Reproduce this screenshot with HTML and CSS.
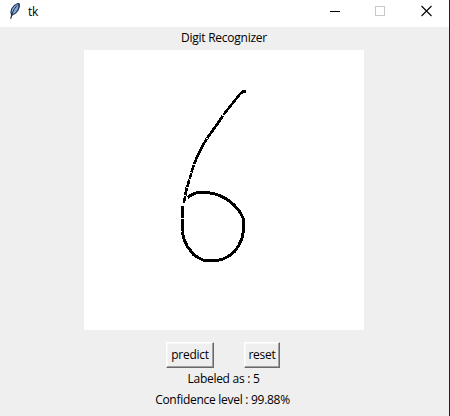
FILE: index.html
```html
<!DOCTYPE html>
<html lang="en">
<head>
<meta charset="utf-8">
<title>tk</title>
<link rel="stylesheet" href="styles.css">
</head>
<body>
<div class="window">
  <header class="titlebar">
    <svg class="feather" width="14" height="18" viewBox="0 0 14 18">
      <path d="M2.700 16.500 3 12.500 2.300 10.500 3.200 6.500 6 3 9.500 1 11.800 1.200 12 4.500 10.500 8.500 8 11.500 4.500 13.500Z" fill="#203a60"/>
      <path d="M3.500 10.500 4.200 7 6.500 4 9.500 2 10.500 4 9.500 7.500 7.500 10.500 5 12Z" fill="#86a8da"/>
      <path d="M2.800 17C3.500 12 5.500 7.500 9 3.500" fill="none" stroke="#1a2638" stroke-width=".9"/>
    </svg>
    <span class="title">tk</span>
    <div class="controls">
      <svg width="46" height="27" viewBox="0 0 46 27" shape-rendering="crispEdges"><path d="M16 11.500h10" stroke="#000"/></svg>
      <svg width="46" height="27" viewBox="0 0 46 27" shape-rendering="crispEdges"><path d="M16.500 6.500h9v9h-9z" fill="none" stroke="#c8c8c8"/></svg>
      <svg width="46" height="27" viewBox="0 0 46 27"><path d="m16.500 6 10 10m0-10-10 10" stroke="#000" stroke-width="1.100"/></svg>
    </div>
  </header>
  <main class="content">
    <h1 class="label heading">Digit Recognizer</h1>
    <svg class="canvas" width="280" height="280" viewBox="84 50 280 280">
      <g fill="none" stroke="#000" stroke-width="3" stroke-linecap="square" stroke-linejoin="round" shape-rendering="crispEdges">
        <path stroke-width="2.600" d="M245 91.500H243L240 94 236 99 232 104 228 109 224 114"/>
        <path stroke-width="2.600" d="M222 117 218 123 213 130 208 137"/>
        <path stroke-width="2.600" d="M206 140 202 147 198 155 194.500 163"/>
        <path stroke-width="2.600" d="M193.500 166 192 171M191 174 190 178M189 181 187.500 186M186.500 189 185.500 194M185 197 184 202"/>
        <path d="M182.500 207V216M182.500 220V229"/>
        <path d="M182.500 233 184 239 187 246 190 250 194 255 199 258 204 260.500H217L223 259 229 256 235 251 239 245 242 238 243.500 231V219L240 212 234 205 228 200 222 196.500 215 194 208 192.500H198L194 193.500 189 196.500"/>
      </g>
    </svg>
    <div class="actions">
      <button class="button predict" type="button">predict</button>
      <button class="button reset" type="button">reset</button>
    </div>
    <p class="label result">Labeled as : 5</p>
    <p class="label confidence">Confidence level : 99.88%</p>
  </main>
</div>
</body>
</html>
```
FILE: styles.css
```css
* { box-sizing: border-box; }
body {
  margin: 0;
  overflow: hidden;
  background: #efefef;
  color: #000;
  font: 12px/16px "Open Sans", "Noto Sans", sans-serif;
}
.window {
  width: 450px;
  height: 416px;
  border-right: 1px solid #202326;
}
.titlebar {
  display: flex;
  height: 27px;
  padding-left: 8px;
  background: #fff;
}
.feather { margin-top: 2px; }
.title { margin: 4px 0 0 6px; letter-spacing: -.3px; }
.controls { display: flex; margin-left: auto; margin-right: -1px; }
.controls svg { display: block; margin-right: -.5px; }
.content {
  display: flex;
  flex-direction: column;
  align-items: center;
  padding-right: 1px;
}
.label { margin: 0; font-size: 12px; font-weight: 400; white-space: nowrap; }
.heading { height: 23px; padding-top: 3px; letter-spacing: -.25px; }
.canvas { display: block; background: #fff; }
.actions {
  display: flex;
  gap: 30px;
  margin: 12px 0 3px;
  padding-right: 2px;
}
.button {
  height: 26px;
  padding: 0 0 1px;
  border: 1px solid;
  border-color: #fff #696969 #696969 #fff;
  box-shadow: inset -1px -1px #a0a0a0, inset 1px 1px #f8f8f8;
  background: #efefef;
  color: #000;
  font: inherit;
  letter-spacing: -.25px;
}
.predict { width: 48px; }
.reset { width: 36px; }
.result { height: 21px; letter-spacing: -.28px; padding-right: 1px; }
.confidence { letter-spacing: -.28px; padding-right: 3px; }
```
